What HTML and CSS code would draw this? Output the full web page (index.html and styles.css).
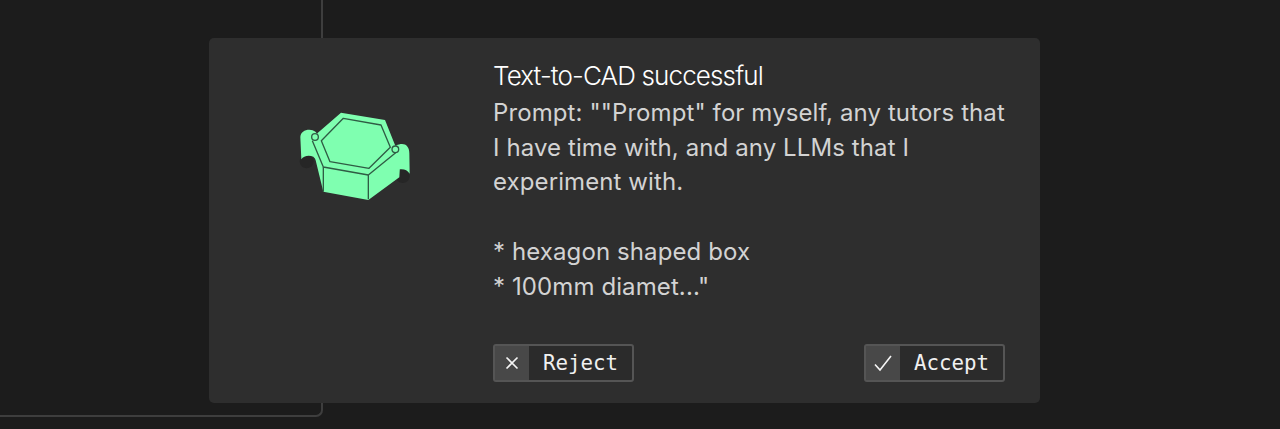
FILE: index.html
```html
<!doctype html>
<html>
  <head>
    <title>Text-to-CAD</title>
    <meta name="viewport" content="width=device-width, initial-scale=1.0" />
    <link rel="stylesheet" href="styles.css">
  </head>
  <body>
    <div class="pane"></div>
    <div class="toast">
      <div class="toast-icon">
        <svg xmlns="http://www.w3.org/2000/svg" width="150" height="130" viewBox="0 0 450 390">
          <!-- shadows under the corner posts -->
          <circle class="post-shadow" cx="80" cy="214" r="21" />
          <circle class="post-shadow" cx="368" cy="258" r="21" />
          <!-- corner posts -->
          <path class="solid" d="M61 142C61 127 74 119 88 119 102 119 114 128 114 142L128 232 100 200C86 194 70 198 64 208Z" />
          <path class="solid" d="M340 180C342 168 354 162 366 162 379 162 388 172 388 190L389 251C382 240 372 236 358 238L335 225Z" />
          <!-- box body -->
          <path class="solid" d="M112 130 183 68 315 90 345 165 362 195 358 262 265 330 130 305 97 170Z" />
          <!-- rim and edges -->
          <path class="edge" d="M190 85 303 105 331 172 267 235 150 215 124 152Z" />
          <path class="edge" d="M97 152 130 231 265 255 347 188" />
          <path class="edge" d="M130 231V305M265 255V328" />
          <circle class="edge" cx="105" cy="141" r="10" />
          <circle class="edge" cx="346" cy="178" r="10" />
        </svg>
      </div>
      <div class="toast-body">
        <h2 class="toast-title">Text-to-CAD successful</h2>
        <p class="toast-text">Prompt: ""Prompt" for myself, any tutors that I have time with, and any LLMs that I experiment with.

* hexagon shaped box
* 100mm diamet..."</p>
        <div class="toast-actions">
          <button class="action">
            <span class="action-icon">
              <svg xmlns="http://www.w3.org/2000/svg" width="14" height="14" viewBox="0 0 14 14">
                <path d="M1.5 1.5 12.5 12.5M12.5 1.5 1.5 12.5" />
              </svg>
            </span>
            <span class="action-label">Reject</span>
          </button>
          <button class="action">
            <span class="action-icon">
              <svg xmlns="http://www.w3.org/2000/svg" width="20" height="18" viewBox="0 0 20 18">
                <path d="M2 10.5 7 16 18 2" />
              </svg>
            </span>
            <span class="action-label">Accept</span>
          </button>
        </div>
      </div>
    </div>
  </body>
</html>
```

FILE: styles.css
```css
html,
body {
  height: 100%;
}
body {
  margin: 0;
  background: #1c1c1c;
  font-family: Inter, sans-serif;
  overflow: hidden;
}
.pane {
  width: 321px;
  height: 415px;
  border-right: 2px solid #3e3e3e;
  border-bottom: 2px solid #3e3e3e;
  border-bottom-right-radius: 7px;
}
.toast {
  position: absolute;
  left: 209px;
  top: 38px;
  width: 831px;
  height: 365px;
  display: flex;
  background: #2e2e2e;
  border-radius: 5px;
}
.toast-icon {
  width: 284px;
  padding: 52px 0 0 71px;
  box-sizing: border-box;
  flex: none;
}
.toast-icon svg {
  display: block;
  filter: blur(0.4px);
}
.solid {
  fill: #7fffb0;
}
.post-shadow {
  fill: #262626;
}
.edge {
  fill: none;
  stroke: #2f5c44;
  stroke-width: 4;
  stroke-linejoin: round;
}
.toast-body {
  width: 512px;
  padding-top: 18px;
  display: flex;
  flex-direction: column;
}
.toast-title {
  margin: 0;
  font-size: 26px;
  line-height: 40px;
  font-weight: 300;
  letter-spacing: -0.87px;
  color: #ffffff;
}
.toast-text {
  margin: 0;
  font-size: 24px;
  line-height: 34.7px;
  letter-spacing: 0.1px;
  color: #d3d3d3;
  white-space: pre-line;
}
.toast-actions {
  display: flex;
  justify-content: space-between;
  margin-top: 40px;
}
.action {
  display: flex;
  align-items: stretch;
  height: 38px;
  padding: 0;
  background: #2b2b2b;
  border: 2px solid #555555;
  border-radius: 3px;
  color: #f0f0f0;
  font-family: "DejaVu Sans Mono", monospace;
  font-size: 20.8px;
  cursor: pointer;
}
.action-icon {
  width: 34px;
  display: flex;
  align-items: center;
  justify-content: center;
  background: #484848;
}
.action-icon svg {
  fill: none;
  stroke: #f5f5f5;
  stroke-width: 1.6;
}
.action-label {
  padding: 0 14px;
  line-height: 34px;
}
```
